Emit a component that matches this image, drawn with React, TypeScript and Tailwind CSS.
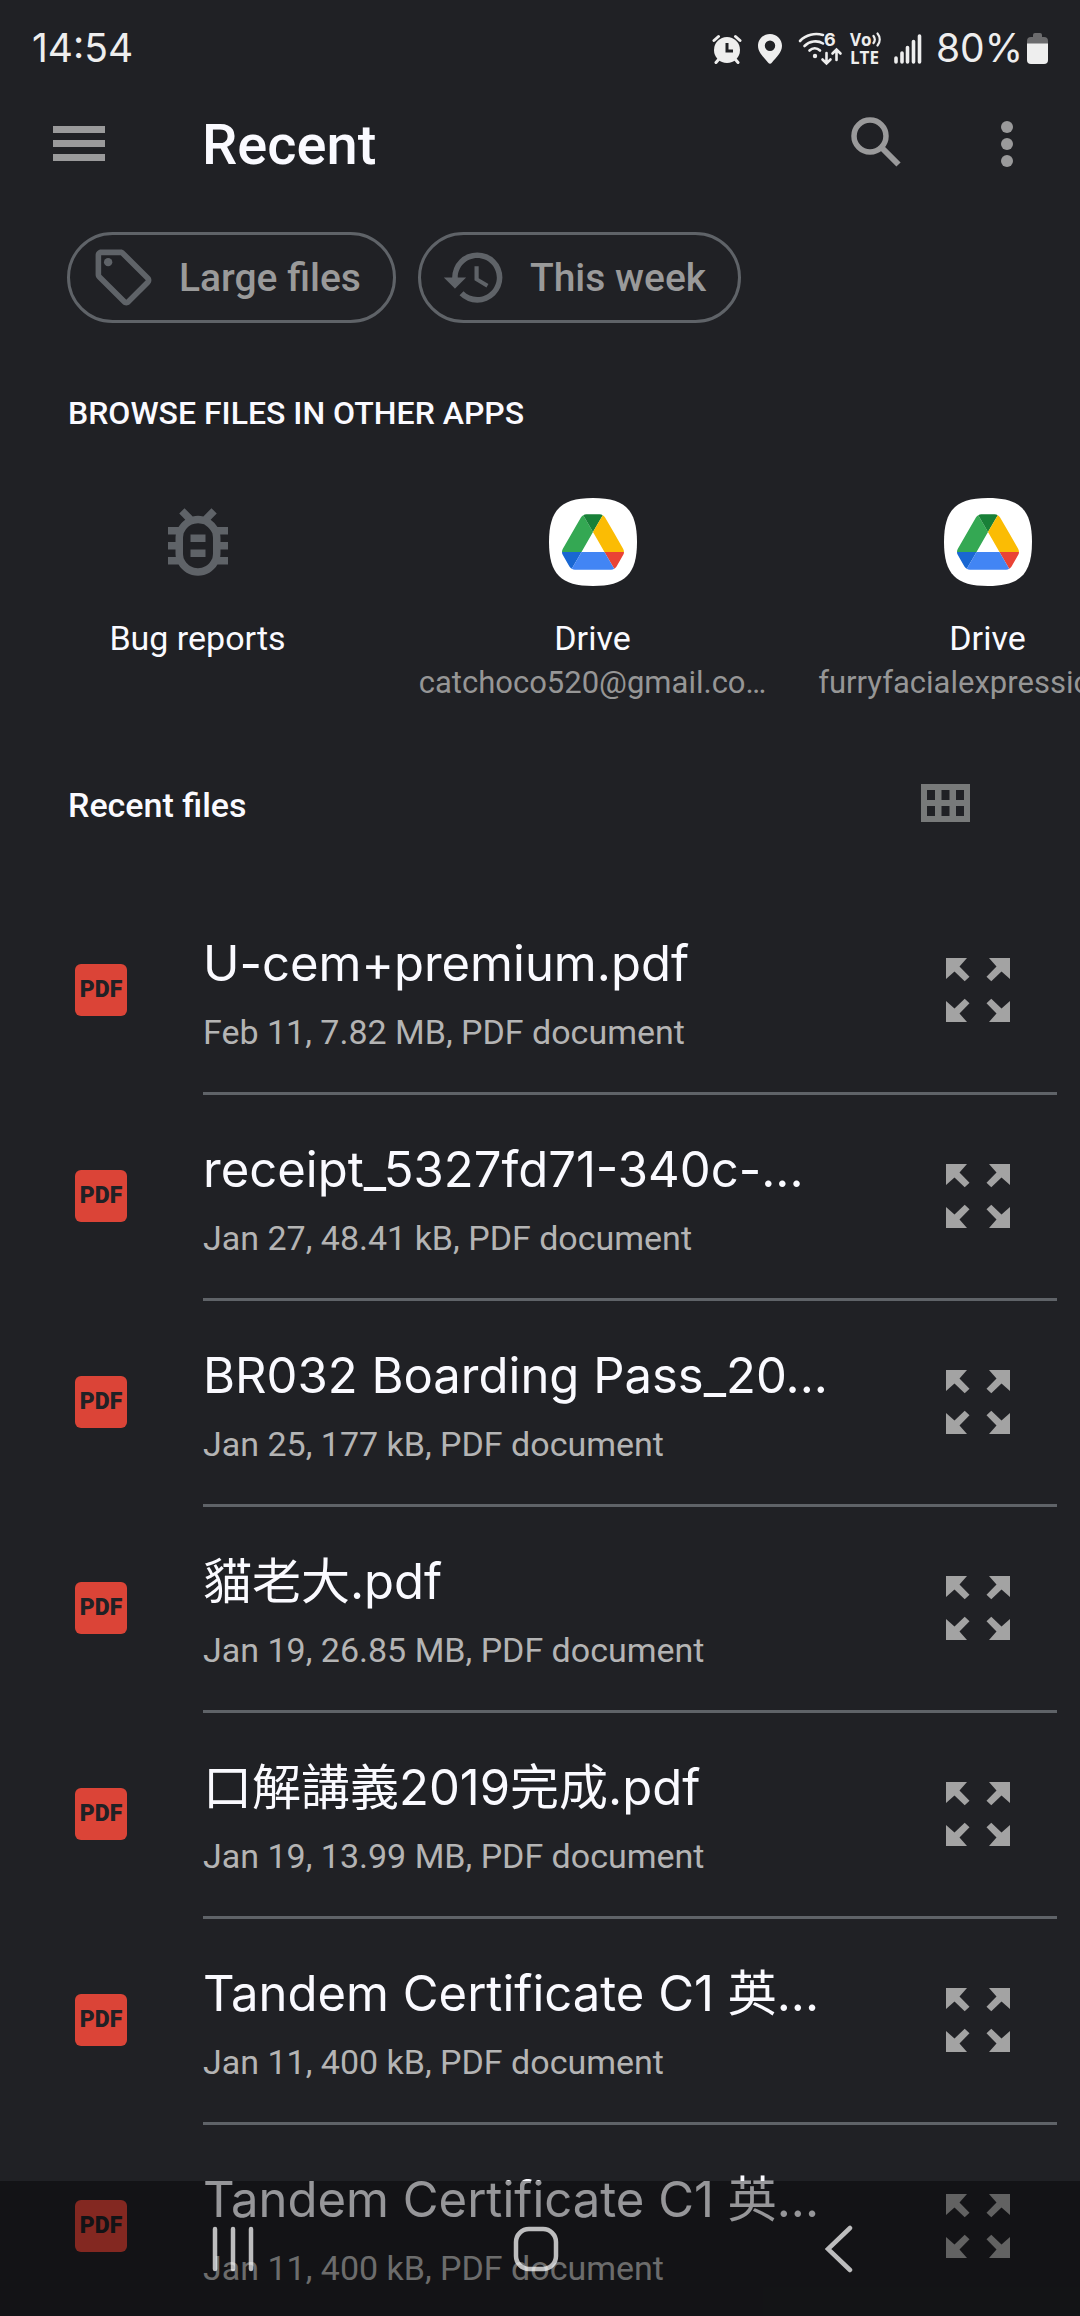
import type { ReactNode } from "react";
import { MdHistory, MdOutlineBugReport, MdOutlineLocalOffer } from "react-icons/md";

const files = [
  { name: "U-cem+premium.pdf", info: "Feb 11, 7.82 MB, PDF document" },
  { name: "receipt_5327fd71-340c-...", info: "Jan 27, 48.41 kB, PDF document" },
  { name: "BR032 Boarding Pass_20...", info: "Jan 25, 177 kB, PDF document" },
  { name: "貓老大.pdf", info: "Jan 19, 26.85 MB, PDF document" },
  { name: "口解講義2019完成.pdf", info: "Jan 19, 13.99 MB, PDF document" },
  { name: "Tandem Certificate C1 英...", info: "Jan 11, 400 kB, PDF document" },
  { name: "Tandem Certificate C1 英...", info: "Jan 11, 400 kB, PDF document" },
];

function AlarmIcon() {
  return (
    <svg width="30" height="30" viewBox="0 0 30 30" aria-hidden="true">
      <circle cx="15" cy="16" r="13" fill="#eee" />
      <g stroke="#eee" strokeWidth="3" strokeLinecap="round">
        <path d="M2 6.5 6.5 2.5M28 6.5 23.5 2.5M4 28.5 7 25M26 28.5 23 25" />
      </g>
      <path d="M15 9v8h6" stroke="#202125" strokeWidth="3" fill="none" />
    </svg>
  );
}

function PinIcon() {
  return (
    <svg width="24" height="30" viewBox="0 0 24 30" aria-hidden="true">
      <path
        fill="#eee"
        fillRule="evenodd"
        d="M12 0C5.3 0 0 5.2 0 11.8c0 7 6 11.500 10 16.700q2 2.500 4 0C18 23.300 24 18.800 24 11.800 24 5.200 18.700 0 12 0Zm0 6.500a5.200 5.200 0 1 1 0 10.400 5.200 5.200 0 0 1 0-10.400Z"
      />
    </svg>
  );
}

function WifiIcon() {
  return (
    <svg width="44" height="33" viewBox="0 0 44 33" className="overflow-visible" aria-hidden="true">
      <g fill="none" stroke="#eee" strokeWidth="2.600" strokeLinecap="round">
        <path d="M2 9C8 2.500 17 .800 25 3" />
        <path d="M6.500 14c5-5 13-6 18.500-2.500" />
        <path d="M11.500 18.500c3-3 7.500-3 10.500 0" />
        <path d="M28.500 21v10M24.500 27.500l4 4 4-4M38.500 28V18M34.500 21.500l4-4 4 4" />
      </g>
      <circle cx="17" cy="24" r="2.200" fill="#eee" />
      <text x="26" y="14" fontSize="18" fontWeight="700" fill="#eee" fontFamily="Inter, sans-serif">
        6
      </text>
    </svg>
  );
}

function VolteIcon() {
  return (
    <div className="flex w-8 flex-col font-['Open_Sans',sans-serif] text-[17px] leading-[18px] font-bold">
      <span className="flex items-center">
        Vo
        <svg width="10" height="15" viewBox="0 0 10 15" aria-hidden="true">
          <path
            d="M1.500 4c1.500 2 1.500 5 0 7M5.500 1.500c3 3.500 3 8.500 0 12"
            fill="none"
            stroke="#eee"
            strokeWidth="2.200"
            strokeLinecap="round"
          />
        </svg>
      </span>
      <span>LTE</span>
    </div>
  );
}

function SignalIcon() {
  return (
    <svg width="28" height="30" viewBox="0 0 28 30" aria-hidden="true">
      <path
        d="M2 24v4M8 19v9M13.500 13.500V28M19.500 7.500V28M25.500 2v26"
        stroke="#eee"
        strokeWidth="3.600"
        strokeLinecap="round"
      />
    </svg>
  );
}

function BatteryIcon() {
  return (
    <svg width="21" height="31" viewBox="0 0 21 31" aria-hidden="true">
      <path d="M6 4V2q0-2 2-2h5q2 0 2 2v2h2q4 0 4 4v4H0V8q0-4 4-4Z" fill="#6b6b6d" />
      <path d="M0 10.500h21V27q0 4-4 4H4q-4 0-4-4Z" fill="#eee" />
    </svg>
  );
}

function DriveIcon() {
  return (
    <svg width="88" height="88" viewBox="0 0 88 88" aria-hidden="true">
      <path
        d="M44 0C76 0 88 12 88 44S76 88 44 88 0 76 0 44 12 0 44 0Z"
        fill="#fff"
      />
      <g transform="translate(13 16.300) scale(.71)">
        <path d="m6.600 66.850 3.850 6.650c.8 1.400 1.950 2.500 3.300 3.300L27.500 53H0c0 1.550.4 3.100 1.200 4.500z" fill="#1967d2" />
        <path d="M43.650 25 29.900 1.200c-1.350.8-2.500 1.900-3.300 3.300l-25.400 44A9.060 9.060 0 0 0 0 53h27.500z" fill="#34a853" />
        <path d="M73.550 76.800c1.350-.8 2.500-1.900 3.300-3.300l1.600-2.750 7.650-13.250c.8-1.400 1.200-2.950 1.200-4.500H59.800z" fill="#ea4335" />
        <path d="M43.650 25 57.400 1.200C56.050.4 54.500 0 52.900 0H34.400c-1.600 0-3.150.45-4.500 1.200z" fill="#188038" />
        <path d="M59.800 53H27.500L13.750 76.800c1.350.8 2.900 1.200 4.500 1.200h50.800c1.600 0 3.150-.45 4.500-1.200z" fill="#4285f4" />
        <path d="m73.400 26.500-12.700-22c-.8-1.400-1.950-2.500-3.300-3.300L43.650 25 59.800 53h27.450c0-1.550-.4-3.100-1.200-4.500z" fill="#fbbc04" />
      </g>
    </svg>
  );
}

function ExpandIcon() {
  const arrow = "M0 0H21L13.500 8.500 23.500 18.700 18.700 23.300 8.500 13.500 0 21Z";
  return (
    <svg width="64" height="64" viewBox="0 0 64 64" fill="#a3a3a3" aria-hidden="true">
      <path d={arrow} />
      <path d={arrow} transform="translate(64 0) scale(-1 1)" />
      <path d={arrow} transform="translate(0 64) scale(1 -1)" />
      <path d={arrow} transform="translate(64 64) scale(-1 -1)" />
    </svg>
  );
}

function StatusBar() {
  return (
    <div className="flex h-[97px] items-center justify-between pr-8 pl-8 font-[Inter,sans-serif] text-[39px] text-[#eee]">
      <time>14:54</time>
      <div className="flex items-center">
        <AlarmIcon />
        <span className="ml-4">
          <PinIcon />
        </span>
        <span className="ml-4">
          <WifiIcon />
        </span>
        <span className="ml-2">
          <VolteIcon />
        </span>
        <span className="ml-3">
          <SignalIcon />
        </span>
        <span className="ml-[14px]">80%</span>
        <span className="ml-1">
          <BatteryIcon />
        </span>
      </div>
    </div>
  );
}

function TopBar() {
  return (
    <header className="flex h-[95px] items-center pr-11 pl-[53px]">
      <button aria-label="Open menu" className="pb-[2px]">
        <svg width="52" height="52" viewBox="0 0 52 52" fill="#9a9a9b" aria-hidden="true">
          <path d="M0 8h52v7H0zM0 22h52v7H0zM0 36h52v7H0z" />
        </svg>
      </button>
      <h1 className="ml-[97px] flex-1 text-[56px] leading-[64px] font-medium">Recent</h1>
      <button aria-label="Search" className="mr-[77px] pb-[6px]">
        <svg width="50" height="50" viewBox="0 0 50 50" fill="none" stroke="#9a9a9b" aria-hidden="true">
          <circle cx="19" cy="19" r="16" strokeWidth="5.500" />
          <path d="M31 31 47.500 47.500" strokeWidth="6" />
        </svg>
      </button>
      <button aria-label="More options" className="flex w-[58px] justify-center pb-[2px]">
        <svg width="12" height="46" viewBox="0 0 12 46" fill="#9a9a9b" aria-hidden="true">
          <circle cx="6" cy="6" r="6" />
          <circle cx="6" cy="23" r="6" />
          <circle cx="6" cy="40" r="6" />
        </svg>
      </button>
    </header>
  );
}

function Chip({ icon, label }: { icon: ReactNode; label: string }) {
  return (
    <button className="flex h-[91px] items-center gap-[22px] rounded-full border-[3px] border-[#5f6368] pr-8 pl-5 text-[39px] font-medium whitespace-nowrap text-[#9a9a9a]">
      <span className="text-[67px] text-[#5f6368]">{icon}</span>
      <span className="pt-[2px]">{label}</span>
    </button>
  );
}

function AppLink({ icon, label, account }: { icon: ReactNode; label: string; account?: string }) {
  return (
    <a href="#app" className="flex w-[395px] shrink-0 flex-col items-center px-5">
      <span className="flex h-[88px] items-center">{icon}</span>
      <span className="mt-[30px] text-[34px] leading-[44px]">{label}</span>
      {account && (
        <span className="text-center text-[31px] leading-[46px] whitespace-nowrap text-[#969696]">{account}</span>
      )}
    </a>
  );
}

function FileRow({ name, info }: { name: string; info: string }) {
  return (
    <li className="flex h-[206px]">
      <div className="flex w-[203px] shrink-0 items-center pb-[4px] pl-[75px]">
        <span className="flex size-[52px] items-center justify-center rounded-md bg-[#db4437] text-[23px] font-black text-[#202125]">
          PDF
        </span>
      </div>
      <div className="mr-[23px] flex min-w-0 flex-1 items-center border-b-[3px] border-[#5f6368] pr-[47px]">
        <div className="min-w-0 flex-1 pt-[10px]">
          <p className="truncate font-[Inter,'Noto_Sans_CJK_TC',sans-serif] text-[49px] leading-[72px]">{name}</p>
          <p className="truncate text-[34px] leading-[64px] text-[#b4b4b4]">{info}</p>
        </div>
        <button aria-label={`Preview ${name}`} className="pb-[2px]">
          <ExpandIcon />
        </button>
      </div>
    </li>
  );
}

function NavBar() {
  return (
    <nav className="absolute inset-x-0 bottom-0 flex h-[135px] items-center justify-center bg-black/40 pr-2">
      <button aria-label="Recent apps" className="flex w-[303px] justify-center">
        <svg width="44" height="46" viewBox="0 0 44 46" stroke="#fff" strokeOpacity=".72" strokeWidth="4.500" strokeLinecap="round">
          <path d="M4 3v40M22 3v40M40 3v40" />
        </svg>
      </button>
      <button aria-label="Home" className="flex w-[303px] justify-center">
        <svg width="46" height="46" viewBox="0 0 46 46" fill="none" stroke="#fff" strokeOpacity=".72" strokeWidth="4.500">
          <rect x="3" y="3" width="40" height="40" rx="13" />
        </svg>
      </button>
      <button aria-label="Back" className="flex w-[303px] justify-center">
        <svg width="28" height="48" viewBox="0 0 28 48" fill="none" stroke="#fff" strokeOpacity=".72" strokeWidth="4.500" strokeLinecap="round">
          <path d="M25 3 3 24 25 45" />
        </svg>
      </button>
    </nav>
  );
}

export default function App() {
  return (
    <div className="relative flex h-screen flex-col overflow-hidden bg-[#202125] font-[Roboto,'Noto_Sans_CJK_TC',sans-serif] text-[#fafaff]">
      <StatusBar />
      <TopBar />
      <main className="min-h-0 flex-1 overflow-hidden">
        <div className="flex gap-[22px] pt-10 pl-[67px]">
          <Chip icon={<MdOutlineLocalOffer />} label="Large files" />
          <Chip icon={<MdHistory />} label="This week" />
        </div>
        <h2 className="mt-[66px] pl-[68px] text-[32px] leading-[48px] font-medium">BROWSE FILES IN OTHER APPS</h2>
        <div className="mt-[61px] flex overflow-hidden">
          <AppLink icon={<MdOutlineBugReport className="size-[90px] text-[#5f6368]" />} label="Bug reports" />
          <AppLink icon={<DriveIcon />} label="Drive" account="catchoco520@gmail.co…" />
          <AppLink icon={<DriveIcon />} label="Drive" account="furryfacialexpression@…" />
        </div>
        <div className="mt-[75px] flex h-[48px] items-center justify-between pr-[110px] pl-[68px]">
          <h2 className="text-[34px] leading-[48px] font-medium">Recent files</h2>
          <button aria-label="Grid view" className="pb-[5px]">
            <svg width="49" height="38" viewBox="0 0 49 38" aria-hidden="true">
              <path
                fill="#787a7a"
                fillRule="evenodd"
                d="M0 0h49v38H0ZM6 6v10h8V6Zm14.500 0v10h8V6ZM35 6v10h8V6ZM6 22v10h8V22Zm14.500 0v10h8V22ZM35 22v10h8V22Z"
              />
            </svg>
          </button>
        </div>
        <ul className="mt-[60px]">
          {files.map((file, index) => (
            <FileRow key={index} name={file.name} info={file.info} />
          ))}
        </ul>
      </main>
      <NavBar />
    </div>
  );
}
